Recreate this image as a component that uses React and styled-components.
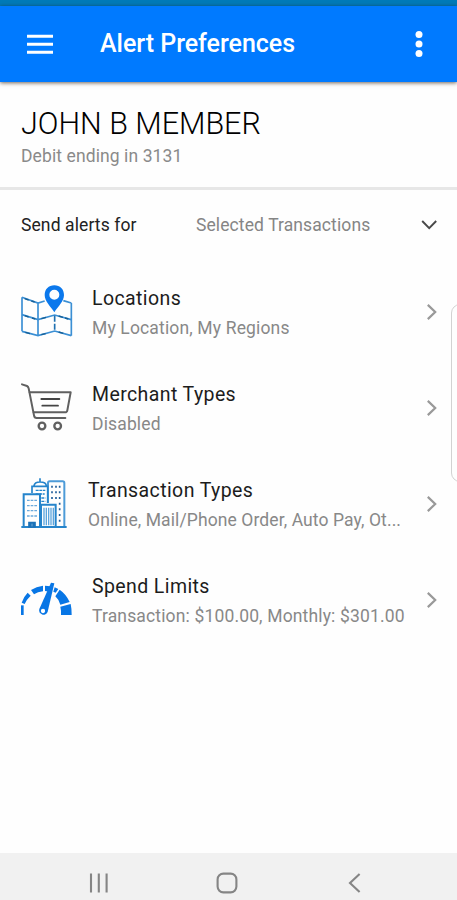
import React from "react";
import styled, { createGlobalStyle } from "styled-components";

const GlobalStyle = createGlobalStyle`
  * { box-sizing: border-box; }
  body { margin: 0; background: #fefefe; font-family: Roboto, "Noto Sans", sans-serif; }
  button { font: inherit; border: 0; padding: 0; background: none; display: flex; }
`;

const Screen = styled.div`
  position: relative;
  display: flex;
  flex-direction: column;
  width: 457px;
  height: 900px;
  overflow: hidden;
  background: #fefefe;
`;

const StatusStrip = styled.div`
  flex: none;
  height: 6px;
  background: #007ab8;
`;

const AppBar = styled.header`
  flex: none;
  display: flex;
  align-items: center;
  height: 76px;
  padding: 0 28px 0 26px;
  background: #007aff;
  box-shadow: 0 1px 4px rgba(40, 20, 0, 0.65);
`;

const AppTitle = styled.h1`
  flex: 1;
  margin: 0 0 0 46px;
  font-size: 25px;
  font-weight: 500;
  line-height: 30px;
  letter-spacing: -0.02px;
  color: #fff;
`;

const Account = styled.section`
  flex: none;
  height: 108px;
  padding: 24px 21px 0;
  border-bottom: 3px solid #e7e7e7;
`;

const Holder = styled.h2`
  margin: 0;
  font-size: 30.5px;
  font-weight: 300;
  line-height: 36px;
  color: #000;
`;

const CardInfo = styled.p`
  margin: 4px 0 0;
  font-size: 17.5px;
  line-height: 20px;
  letter-spacing: 0.1px;
  color: #8a8a8a;
`;

const AlertScope = styled.div`
  flex: none;
  display: flex;
  align-items: center;
  height: 74px;
  padding: 0 19px 0 21px;
  font-size: 17.5px;
`;

const ScopeLabel = styled.span`
  width: 175px;
  padding-bottom: 4px;
  letter-spacing: 0.1px;
  color: #222;
`;

const ScopeValue = styled.span`
  flex: 1;
  padding-bottom: 4px;
  letter-spacing: 0.1px;
  color: #858585;
`;

const ScopeArrow = styled.span`
  display: flex;
  padding-bottom: 4px;
`;

const RowList = styled.main`
  flex: 1;
`;

const Row = styled.div`
  display: flex;
  align-items: center;
  height: 96px;
  padding: 0 19px 0 18px;
`;

const RowText = styled.div`
  flex: 1;
  min-width: 0;
  padding-top: 4px;
  margin-left: ${(p) => (p.$tight ? "14px" : "18px")};
`;

const RowTitle = styled.div`
  font-size: 19.5px;
  line-height: 28px;
  letter-spacing: 0.4px;
  color: #1c1c1c;
`;

const RowDetail = styled.div`
  font-size: 17.5px;
  line-height: 30px;
  letter-spacing: ${(p) => (p.$tight ? "0.1px" : "0.15px")};
  white-space: nowrap;
  color: #888;
`;

const EdgePanel = styled.aside`
  position: absolute;
  left: 451px;
  top: 304px;
  width: 20px;
  height: 178px;
  border: 1px solid #d2d2d2;
  border-radius: 9px;
  background: #fefefe;
`;

const NavBar = styled.nav`
  flex: none;
  display: grid;
  grid-template-columns: repeat(3, 128px);
  justify-content: center;
  justify-items: center;
  align-items: center;
  height: 47px;
  padding-top: 13px;
  padding-right: 4px;
  background: #f1f1f1;
`;

const MenuIcon = () => (
  <svg width="28" height="24" viewBox="0 0 28 24">
    <path d="M1 4.2H27M1 12.2H27M1 20.2H27" stroke="#fff" strokeWidth="2.9" />
  </svg>
);

const MoreIcon = () => (
  <svg width="20" height="28" viewBox="0 0 20 28" fill="#fff">
    <circle cx="10" cy="4.6" r="3.5" />
    <circle cx="10" cy="14" r="3.5" />
    <circle cx="10" cy="23.4" r="3.5" />
  </svg>
);

const MapIcon = () => (
  <svg width="56" height="60" viewBox="24 21 168 180" fill="none">
    <g stroke="#3b8fd4" strokeWidth="5">
      <path d="M36 67V169M84 85V182M184 84V182M36 67L84 84L104 78M160 77L184 84M36 169L84 182L134 168L184 182" />
      <path d="M36 119L84 134L134 120L184 134" />
    </g>
    <path d="M134 122V168" stroke="#1e6fb0" strokeWidth="5" strokeDasharray="18 6" />
    <path d="M44 71l12 4M64 78l10 3M44 122l12 4M66 129l10 3M94 131l14-4M146 123l13 4M165 129l10 3M46 172l14 4M94 179l13-3M146 171l14 4" stroke="#155f96" strokeWidth="4" />
    <path
      fillRule="evenodd"
      d="M133 31C116 31 104 43 104 60C104 79 122 94 133 112C144 94 162 79 162 60C162 43 150 31 133 31ZM133 44A15 15 0 1 1 133 74A15 15 0 1 1 133 44Z"
      fill="#0b78ec"
    />
  </svg>
);

const CartIcon = () => (
  <svg width="56" height="60" viewBox="24 24 168 180" fill="none" stroke="#606060" strokeLinecap="round" strokeLinejoin="round">
    <path d="M36 43L51 48Q55 50 56 55L72 136Q73 144 80 144H166" strokeWidth="6" />
    <path d="M59 67H182L172 121Q171 127 165 127H71" strokeWidth="6" />
    <path d="M94 87H148M97 107H144" strokeWidth="5.5" stroke="#444" />
    <circle cx="96" cy="168" r="10" strokeWidth="7" />
    <circle cx="143" cy="168" r="10" strokeWidth="7" />
  </svg>
);

const BuildingsIcon = () => (
  <svg width="56" height="60" viewBox="24 27 168 180" fill="none" stroke="#2584cb" strokeWidth="5">
    <path d="M114 114V54Q114 49 119 49H158Q163 49 163 54V186" strokeWidth="6" stroke="#4d9bd8" />
    <path d="M66 84V64H113V114M72 62Q74 51 90 51Q108 51 109 62M90 40V51" />
    <path d="M41 186V88H90V186" strokeWidth="6" />
    <path d="M93 186V119H137V186" strokeWidth="6" />
    <path d="M34 186H170" strokeWidth="6" />
    <path d="M77 76H106M77 87H104M94 99H106M94 109H106" strokeWidth="4" strokeDasharray="9 2" />
    <path d="M51 106H82M51 122H82M51 137H82M51 153H82" strokeWidth="4" stroke="#6aa9db" strokeDasharray="8 3" />
    <path d="M126 62V113M138 62V113M149 62V177" strokeDasharray="6 11" stroke="#225f9b" />
    <path d="M102 128V181M109 128V181M116 128V181M123 128V181M130 128V181" strokeWidth="4" stroke="#5ca5dd" />
    <path d="M57 186V173H75V186Z" fill="#1b72b8" stroke="#1b72b8" />
    <path d="M66 176V184" strokeWidth="2" stroke="#9dcaed" />
  </svg>
);

const GaugeIcon = () => (
  <svg width="56" height="60" viewBox="24 15 168 180" fill="#0876e5">
    <path d="M33 150V121H41V150Z" />
    <path d="M35 113Q40 96 53 83L62 92Q50 103 44 117Z" />
    <path d="M63 75Q79 64 99 62V79Q83 80 72 88Z" />
    <path d="M105 62L121 64L118 80L105 78Z" />
    <path d="M134 67L145 72L137 83L130 80Z" />
    <path d="M149 74Q169 88 179 111L151 119Q147 104 136 94Z" />
    <path d="M151 125L182 117Q185 130 185 150H153Q154 137 151 125Z" />
    <path d="M123 53L133 55L113 140A13 13 0 1 1 88 132Z" />
    <circle cx="99" cy="138" r="6.5" fill="#fff" />
  </svg>
);

const DownChevron = () => (
  <svg width="18" height="12" viewBox="0 0 18 12" fill="none">
    <path d="M2.2 2L9.2 9.2L16.2 2" stroke="#484848" strokeWidth="1.9" />
  </svg>
);

const RightChevron = () => (
  <svg width="12" height="18" viewBox="0 0 12 18" fill="none">
    <path d="M1.8 1.9L9.2 9L1.8 16.1" stroke="#999" strokeWidth="2.2" />
  </svg>
);

const RecentsIcon = () => (
  <svg width="22" height="22" viewBox="0 0 22 22">
    <path d="M3 1.5V20.5M10.8 1.5V20.5M18.6 1.5V20.5" stroke="#858585" strokeWidth="2.1" />
  </svg>
);

const HomeIcon = () => (
  <svg width="22" height="22" viewBox="0 0 22 22">
    <rect x="1.6" y="1.6" width="18.8" height="18.8" rx="5.8" fill="none" stroke="#858585" strokeWidth="2.1" />
  </svg>
);

const BackIcon = () => (
  <svg width="22" height="22" viewBox="0 0 22 22">
    <path d="M15.6 2L6 11L15.6 20" fill="none" stroke="#858585" strokeWidth="2.1" />
  </svg>
);

const rows = [
  { title: "Locations", detail: "My Location, My Regions", Icon: MapIcon },
  { title: "Merchant Types", detail: "Disabled", Icon: CartIcon },
  { title: "Transaction Types", detail: "Online, Mail/Phone Order, Auto Pay, Ot...", Icon: BuildingsIcon, tight: true },
  { title: "Spend Limits", detail: "Transaction: $100.00, Monthly: $301.00", Icon: GaugeIcon },
];

export default function App() {
  return (
    <Screen>
      <GlobalStyle />
      <StatusStrip />
      <AppBar>
        <button aria-label="Menu"><MenuIcon /></button>
        <AppTitle>Alert Preferences</AppTitle>
        <button aria-label="More options"><MoreIcon /></button>
      </AppBar>
      <Account>
        <Holder>JOHN B MEMBER</Holder>
        <CardInfo>Debit ending in 3131</CardInfo>
      </Account>
      <AlertScope>
        <ScopeLabel>Send alerts for</ScopeLabel>
        <ScopeValue>Selected Transactions</ScopeValue>
        <ScopeArrow><DownChevron /></ScopeArrow>
      </AlertScope>
      <RowList>
        {rows.map(({ title, detail, Icon, tight }) => (
          <Row key={title}>
            <Icon />
            <RowText $tight={tight}>
              <RowTitle>{title}</RowTitle>
              <RowDetail $tight={tight}>{detail}</RowDetail>
            </RowText>
            <RightChevron />
          </Row>
        ))}
      </RowList>
      <EdgePanel />
      <NavBar>
        <button aria-label="Recents"><RecentsIcon /></button>
        <button aria-label="Home"><HomeIcon /></button>
        <button aria-label="Back"><BackIcon /></button>
      </NavBar>
    </Screen>
  );
}
